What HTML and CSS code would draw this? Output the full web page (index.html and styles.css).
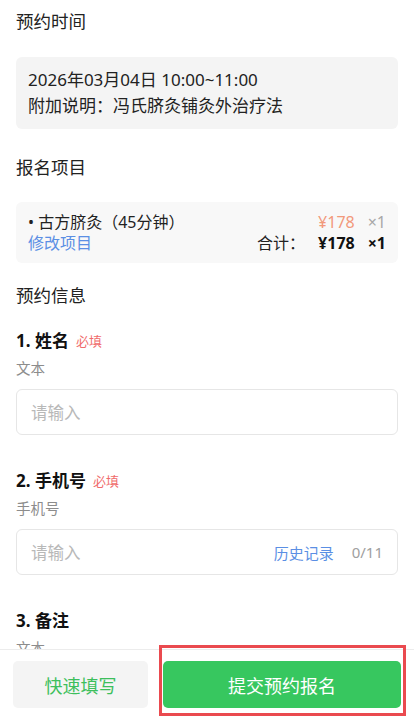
FILE: index.html
```html
<!DOCTYPE html>
<html lang="zh-CN">
<head>
<meta charset="utf-8">
<meta name="viewport" content="width=device-width, initial-scale=1">
<title>预约报名</title>
<link rel="stylesheet" href="styles.css">
</head>
<body>
<main class="page">
  <h2 class="section-title first">预约时间</h2>
  <div class="time-box">
    <div class="time-line">2026年03月04日 10:00~11:00</div>
    <div class="time-line">附加说明：冯氏脐灸铺灸外治疗法</div>
  </div>

  <h2 class="section-title">报名项目</h2>
  <div class="item-box">
    <div class="item-name">• 古方脐灸（45分钟）</div>
    <div></div>
    <div class="price unit">¥178</div>
    <div class="qty unit">×1</div>
    <a class="item-edit">修改项目</a>
    <div class="total-label">合计：</div>
    <div class="price total">¥178</div>
    <div class="qty total">×1</div>
  </div>

  <h2 class="section-title info">预约信息</h2>

  <div class="field">
    <div class="field-title">1. 姓名<span class="required">必填</span></div>
    <div class="field-sub">文本</div>
    <div class="field-input"><input type="text" placeholder="请输入"></div>
  </div>

  <div class="field">
    <div class="field-title">2. 手机号<span class="required">必填</span></div>
    <div class="field-sub">手机号</div>
    <div class="field-input"><input type="text" placeholder="请输入"><span class="history">历史记录</span><span class="counter">0/11</span></div>
  </div>

  <div class="field">
    <div class="field-title">3. 备注</div>
    <div class="field-sub">文本</div>
    <div class="field-input"><input type="text" placeholder="请输入"></div>
  </div>
</main>

<footer class="bottom-bar">
  <button class="btn btn-quick">快速填写</button>
  <button class="btn btn-submit">提交预约报名</button>
</footer>
<div class="highlight"></div>
</body>
</html>
```

FILE: styles.css
```css
* { box-sizing: border-box; }

html, body {
  margin: 0;
  padding: 0;
  background: #ffffff;
  font-family: "Noto Sans", "Noto Sans CJK SC", sans-serif;
  color: #222222;
}

.page {
  padding: 0 16px 120px;
}

.section-title {
  margin: 26px 0 23px;
  font-size: 17.5px;
  line-height: 24px;
  font-weight: 400;
  color: #222222;
}

.section-title.first {
  margin-top: 9px;
  margin-bottom: 24px;
}

.section-title.info {
  margin-top: 20px;
  margin-bottom: 22px;
}

.time-box {
  background: #f4f4f4;
  border-radius: 6px;
  padding: 10px 12px;
}

.time-line {
  font-size: 17px;
  line-height: 26px;
  color: #222222;
}

.item-box {
  background: #f8f8f8;
  border-radius: 6px;
  padding: 10px 12px 9px;
  display: grid;
  grid-template-columns: 1fr auto auto auto;
  column-gap: 13px;
  align-items: center;
  font-size: 16px;
  line-height: 21px;
}

.item-name { color: #222222; }

.item-edit {
  color: #5b8fe4;
  cursor: pointer;
}

.total-label {
  color: #222222;
  margin-right: 0;
}

.price { text-align: right; }
.qty { text-align: right; }

.price.unit { color: #f2997b; }
.qty.unit { color: #a8a8a8; }

.price.total, .qty.total {
  font-weight: 700;
  color: #111111;
}

.field {
  margin-bottom: 34px;
}

.field-title {
  font-size: 17px;
  line-height: 24px;
  font-weight: 700;
  color: #111111;
  display: flex;
  align-items: center;
}

.required {
  font-size: 13px;
  font-weight: 400;
  color: #f06b6b;
  margin-left: 7px;
}

.field-sub {
  margin-top: 5px;
  font-size: 14.5px;
  line-height: 20px;
  color: #8c8c8c;
}

.field-input {
  margin-top: 11px;
  height: 46px;
  border: 1px solid #e6e6e6;
  border-radius: 6px;
  padding: 0 14px;
  display: flex;
  align-items: center;
  font-size: 16px;
}

.field-input input {
  flex: 1;
  min-width: 0;
  border: none;
  outline: none;
  background: transparent;
  font: inherit;
  font-size: 16.5px;
  color: #222222;
  padding: 0;
}

.field-input input::placeholder {
  color: #b8b8b8;
}

.history {
  color: #5b8fe4;
  font-size: 15px;
  margin-right: 18px;
}

.counter {
  color: #a0a0a0;
  font-size: 15px;
}

.bottom-bar {
  position: fixed;
  left: 0;
  right: 0;
  bottom: 0;
  height: 70px;
  background: #ffffff;
  border-top: 1px solid #ececec;
  padding: 11px 13px 11px;
  display: flex;
  gap: 15px;
}

.btn {
  height: 47px;
  border: none;
  border-radius: 5px;
  font-family: inherit;
  font-size: 18px;
  cursor: pointer;
}

.btn-quick {
  width: 135px;
  background: #f4f4f4;
  color: #3dbf5c;
}

.btn-submit {
  flex: 1;
  background: #37c75f;
  color: #ffffff;
}

.highlight {
  position: fixed;
  left: 159px;
  top: 645px;
  width: 247px;
  height: 71px;
  border: 3px solid #ea4a4f;
  pointer-events: none;
}
```
